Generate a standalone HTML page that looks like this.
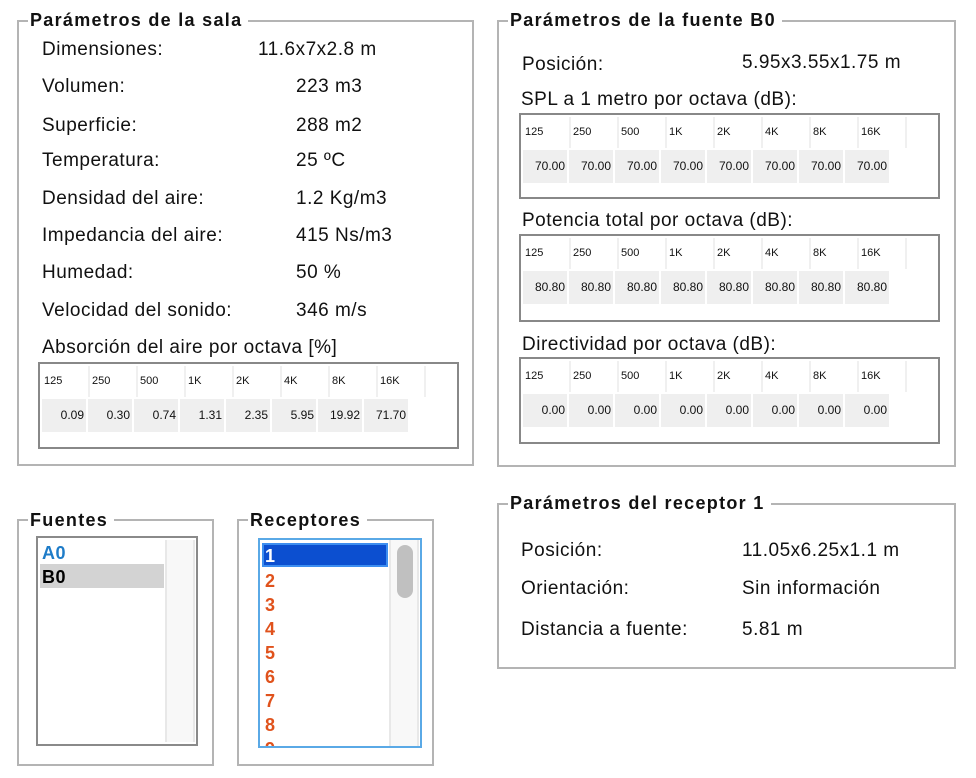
<!DOCTYPE html>
<html><head><meta charset="utf-8"><style>
body{margin:0;width:976px;height:778px;background:#fff;font-family:"Liberation Sans",sans-serif;color:#111;position:relative;overflow:hidden}
.g{position:absolute;border:2px solid #b4b4b4;box-sizing:border-box}
.gt{position:absolute;background:#fff;font-weight:bold;font-size:18px;letter-spacing:1.3px;line-height:20px;padding:0 6px 0 2px}
.t{position:absolute;font-size:19px;letter-spacing:0.5px;line-height:22px;white-space:nowrap;margin-top:2px}
.tb{position:absolute;border:2px solid #888;box-sizing:border-box;width:421px;background:#fff}
.row{position:absolute;left:2px;display:flex}
.h div{width:46px;height:31px;border-right:2px solid #f0f0f0;font-size:11px;line-height:31px;text-indent:2px}
.d div{width:46px;height:33px;border-right:2px solid #fff;background:#efefef;font-size:12px;line-height:33px;text-align:right;box-sizing:border-box;padding-right:2px}
.li{position:absolute;font-weight:bold;font-size:18px;letter-spacing:0.5px;line-height:24px;color:#e0521c}
</style></head><body>

<div class="g" style="left:17px;top:20px;width:457px;height:446px"></div>
<div class="gt" style="left:28px;top:10px">Parámetros de la sala</div>
<div class="t" style="left:42px;top:37px">Dimensiones:</div><div class="t" style="left:258px;top:37px">11.6x7x2.8 m</div>
<div class="t" style="left:42px;top:74px">Volumen:</div><div class="t" style="left:296px;top:74px">223 m3</div>
<div class="t" style="left:42px;top:113px">Superficie:</div><div class="t" style="left:296px;top:113px">288 m2</div>
<div class="t" style="left:42px;top:148px">Temperatura:</div><div class="t" style="left:296px;top:148px">25 ºC</div>
<div class="t" style="left:42px;top:186px">Densidad del aire:</div><div class="t" style="left:296px;top:186px">1.2 Kg/m3</div>
<div class="t" style="left:42px;top:223px">Impedancia del aire:</div><div class="t" style="left:296px;top:223px">415 Ns/m3</div>
<div class="t" style="left:42px;top:260px">Humedad:</div><div class="t" style="left:296px;top:260px">50 %</div>
<div class="t" style="left:42px;top:298px">Velocidad del sonido:</div><div class="t" style="left:296px;top:298px">346 m/s</div>
<div class="t" style="left:42px;top:335px">Absorción del aire por octava [%]</div>
<div class="tb" style="left:38px;top:362px;height:87px">
<div class="row h" style="top:2px"><div>125</div><div>250</div><div>500</div><div>1K</div><div>2K</div><div>4K</div><div>8K</div><div>16K</div></div>
<div class="row d" style="top:35px"><div>0.09</div><div>0.30</div><div>0.74</div><div>1.31</div><div>2.35</div><div>5.95</div><div>19.92</div><div>71.70</div></div>
</div>

<div class="g" style="left:497px;top:20px;width:459px;height:447px"></div>
<div class="gt" style="left:508px;top:10px">Parámetros de la fuente B0</div>
<div class="t" style="left:522px;top:52px">Posición:</div><div class="t" style="left:742px;top:50px">5.95x3.55x1.75 m</div>
<div class="t" style="left:521px;top:87px">SPL a 1 metro por octava (dB):</div>
<div class="tb" style="left:519px;top:113px;height:86px">
<div class="row h" style="top:2px"><div>125</div><div>250</div><div>500</div><div>1K</div><div>2K</div><div>4K</div><div>8K</div><div>16K</div></div>
<div class="row d" style="top:35px"><div>70.00</div><div>70.00</div><div>70.00</div><div>70.00</div><div>70.00</div><div>70.00</div><div>70.00</div><div>70.00</div></div>
</div>
<div class="t" style="left:522px;top:208px">Potencia total por octava (dB):</div>
<div class="tb" style="left:519px;top:234px;height:88px">
<div class="row h" style="top:2px"><div>125</div><div>250</div><div>500</div><div>1K</div><div>2K</div><div>4K</div><div>8K</div><div>16K</div></div>
<div class="row d" style="top:35px"><div>80.80</div><div>80.80</div><div>80.80</div><div>80.80</div><div>80.80</div><div>80.80</div><div>80.80</div><div>80.80</div></div>
</div>
<div class="t" style="left:522px;top:332px">Directividad por octava (dB):</div>
<div class="tb" style="left:519px;top:357px;height:87px">
<div class="row h" style="top:2px"><div>125</div><div>250</div><div>500</div><div>1K</div><div>2K</div><div>4K</div><div>8K</div><div>16K</div></div>
<div class="row d" style="top:35px"><div>0.00</div><div>0.00</div><div>0.00</div><div>0.00</div><div>0.00</div><div>0.00</div><div>0.00</div><div>0.00</div></div>
</div>

<div class="g" style="left:17px;top:519px;width:197px;height:247px"></div>
<div class="gt" style="left:28px;top:510px">Fuentes</div>
<div style="position:absolute;left:36px;top:536px;width:162px;height:210px;border:2px solid #8a8a8a;box-sizing:border-box">
 <div style="position:absolute;left:127px;top:2px;width:30px;height:202px;background:#f8f8f8;border-left:2px solid #e8e8e8;border-right:2px solid #e8e8e8;box-sizing:border-box"></div>
 <div style="position:absolute;left:2px;top:26px;width:124px;height:24px;background:#d3d3d3"></div>
 <div class="li" style="left:4px;top:3px;color:#1e7cc8">A0</div>
 <div class="li" style="left:4px;top:27px;color:#000">B0</div>
</div>

<div class="g" style="left:237px;top:519px;width:197px;height:247px"></div>
<div class="gt" style="left:248px;top:510px">Receptores</div>
<div style="position:absolute;left:258px;top:538px;width:164px;height:210px;border:2px solid #5aa9e6;box-sizing:border-box;overflow:hidden">
 <div style="position:absolute;left:129px;top:0;width:30px;height:206px;background:#f8f8f8;border-left:2px solid #e8e8e8;border-right:2px solid #e8e8e8;box-sizing:border-box"></div>
 <div style="position:absolute;left:137px;top:5px;width:16px;height:53px;border-radius:8px;background:#c0c0c0"></div>
 <div style="position:absolute;left:2px;top:3px;width:126px;height:24px;background:#0c4fd0;border:2px solid #3d8ef0;box-sizing:border-box"></div>
 <div class="li" style="left:5px;top:4px;color:#fff">1</div>
 <div class="li" style="left:5px;top:29px">2</div>
 <div class="li" style="left:5px;top:53px">3</div>
 <div class="li" style="left:5px;top:77px">4</div>
 <div class="li" style="left:5px;top:101px">5</div>
 <div class="li" style="left:5px;top:125px">6</div>
 <div class="li" style="left:5px;top:149px">7</div>
 <div class="li" style="left:5px;top:173px">8</div>
 <div class="li" style="left:5px;top:197px">9</div>
</div>

<div class="g" style="left:497px;top:503px;width:459px;height:166px"></div>
<div class="gt" style="left:508px;top:493px">Parámetros del receptor 1</div>
<div class="t" style="left:521px;top:538px">Posición:</div><div class="t" style="left:742px;top:538px">11.05x6.25x1.1 m</div>
<div class="t" style="left:521px;top:576px">Orientación:</div><div class="t" style="left:742px;top:576px">Sin información</div>
<div class="t" style="left:521px;top:617px">Distancia a fuente:</div><div class="t" style="left:742px;top:617px">5.81 m</div>

</body></html>
